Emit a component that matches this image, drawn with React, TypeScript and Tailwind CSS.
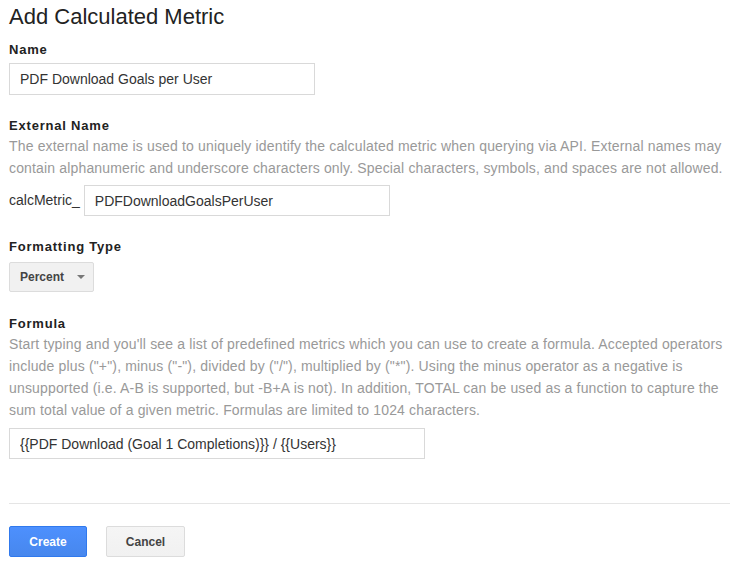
import { useState } from "react";

function Label({ children }: { children: React.ReactNode }) {
  return (
    <div className="text-[13px] font-bold leading-[18px] tracking-[0.8px] text-[#222]">
      {children}
    </div>
  );
}

function Help({ children }: { children: React.ReactNode }) {
  return <p className="text-[14px] leading-[22px] tracking-[0.16px] text-[#999]">{children}</p>;
}

export default function App() {
  const [name, setName] = useState("PDF Download Goals per User");
  const [external, setExternal] = useState("PDFDownloadGoalsPerUser");
  const [formula, setFormula] = useState("{{PDF Download (Goal 1 Completions)}} / {{Users}}");

  return (
    <div className="min-h-[572px] bg-white pl-[9px] pr-[17px] pt-[5px] font-['Liberation_Sans',Arial,sans-serif] text-[#333]">
      <h1 className="text-[22px] leading-[24px] text-[#222]">Add Calculated Metric</h1>

      <div className="mt-[12px]">
        <Label>Name</Label>
        <input
          className="mt-[4px] block h-[32px] w-[306px] border border-[#d9d9d9] px-[10px] text-[14px] text-[#333] outline-none"
          value={name}
          onChange={(e) => setName(e.target.value)}
        />
      </div>

      <div className="mt-[22px]">
        <Label>External Name</Label>
        <Help>
          The external name is used to uniquely identify the calculated metric when querying via API. External names may
          contain alphanumeric and underscore characters only. Special characters, symbols, and spaces are not allowed.
        </Help>
        <div className="mt-[6px] flex items-center gap-[4px]">
          <span className="text-[14px] text-[#333]">calcMetric_</span>
          <input
            className="block h-[31px] w-[306px] border border-[#d9d9d9] px-[10px] text-[14px] text-[#333] outline-none"
            value={external}
            onChange={(e) => setExternal(e.target.value)}
          />
        </div>
      </div>

      <div className="mt-[22px]">
        <Label>Formatting Type</Label>
        <button className="mt-[6px] flex h-[30px] w-[85px] items-center rounded-[2px] border border-[#dcdcdc] bg-[#f1f1f1] pl-[10px] text-[12px] font-bold text-[#444]">
          Percent
          <span className="ml-[13px] h-0 w-0 border-x-[4px] border-t-[4px] border-x-transparent border-t-[#777]" />
        </button>
      </div>

      <div className="mt-[23px]">
        <Label>Formula</Label>
        <Help>
          Start typing and you'll see a list of predefined metrics which you can use to create a formula. Accepted operators
          include plus ("+"), minus ("-"), divided by ("/"), multiplied by ("*"). Using the minus operator as a negative is
          unsupported (i.e. A-B is supported, but -B+A is not). In addition, TOTAL can be used as a function to capture the
          sum total value of a given metric. Formulas are limited to 1024 characters.
        </Help>
        <input
          className="mt-[7px] block h-[31px] w-[416px] border border-[#d9d9d9] px-[10px] text-[14px] text-[#333] outline-none"
          value={formula}
          onChange={(e) => setFormula(e.target.value)}
        />
      </div>

      <div className="mt-[44px] h-px bg-[#e5e5e5]" />

      <div className="mt-[22px] flex gap-[19px]">
        <button className="h-[31px] w-[78px] rounded-[2px] border border-[#3079ed] bg-gradient-to-b from-[#4d90fe] to-[#4787ed] text-[12px] font-bold text-white">
          Create
        </button>
        <button className="h-[31px] w-[79px] rounded-[2px] border border-[#dcdcdc] bg-gradient-to-b from-[#f5f5f5] to-[#f1f1f1] text-[12px] font-bold text-[#444]">
          Cancel
        </button>
      </div>
    </div>
  );
}
